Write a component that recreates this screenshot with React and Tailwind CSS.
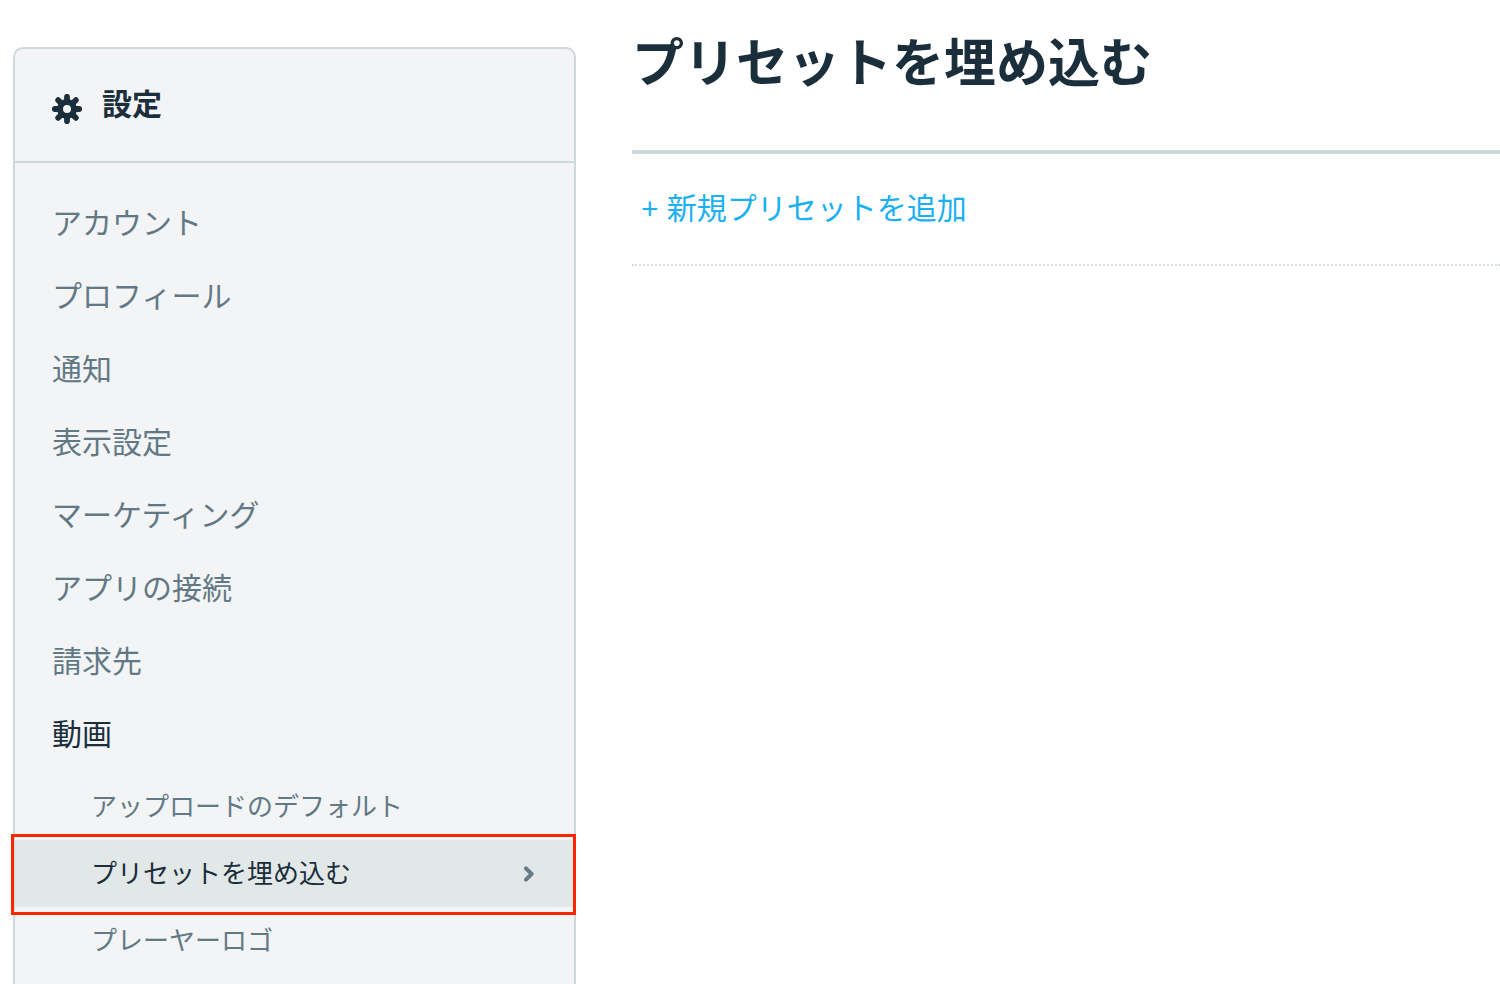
/**
 * Settings Page
 *
 * Sidebar navigation on the left, embed preset list on the right.
 */

const mainLinks = [
  'アカウント',
  'プロフィール',
  '通知',
  '表示設定',
  'マーケティング',
  'アプリの接続',
  '請求先',
];

const videoLinks = [
  { label: 'アップロードのデフォルト' },
  { label: 'プリセットを埋め込む', active: true },
  { label: 'プレーヤーロゴ' },
];

const GearIcon = ({ className }) => (
  <svg className={className} viewBox="0 0 30 30" fill="none" aria-hidden="true">
    <circle cx="15" cy="15" r="7" stroke="currentColor" strokeWidth="6" />
    <path
      d="M15 1.8v6M15 22.2v6M1.8 15h6M22.2 15h6M5.5 5.5l4 4M20.5 20.5l4 4M24.5 5.5l-4 4M9.5 20.5l-4 4"
      stroke="currentColor"
      strokeWidth="3.6"
      strokeLinecap="round"
    />
    <path
      d="M15 2.9v5M15 22.1v5M2.9 15h5M22.1 15h5M6.2 6.2l3.4 3.4M20.4 20.4l3.4 3.4M23.8 6.2l-3.4 3.4M9.6 20.4l-3.4 3.4"
      stroke="currentColor"
      strokeWidth="5.8"
      strokeLinecap="round"
    />
  </svg>
);

const ChevronIcon = ({ className }) => (
  <svg className={className} viewBox="0 0 10 16" fill="none" aria-hidden="true">
    <path
      d="M2 2.4L7.6 8L2 13.6"
      stroke="currentColor"
      strokeWidth="4"
      strokeLinecap="round"
      strokeLinejoin="round"
    />
  </svg>
);

const SubLink = ({ label, active = false }) => (
  <li className="relative">
    <a
      href="#"
      aria-current={active ? 'page' : undefined}
      className={`flex h-[67px] items-center justify-between pr-10 pl-19 text-[26px] leading-8 ${
        active ? 'bg-[#e2e8e7] text-[#1a2e3b]' : 'text-[#627985]'
      }`}
    >
      {label}
      {active && <ChevronIcon className="h-4 w-2.5 text-[#667b8a]" />}
    </a>

    {/* Red outline around the current page */}
    {active && (
      <span className="pointer-events-none absolute -top-1.5 -right-0.5 -bottom-2 -left-1 z-10 border-3 border-[#ff2600]" />
    )}
  </li>
);

const Sidebar = () => (
  <aside className="mt-[47px] w-[563px] shrink-0 rounded-t-[10px] border-2 border-b-0 border-[#ced9dc] bg-[#f2f4f6]">
    <header className="flex h-[114px] items-center gap-5 border-b-2 border-[#ced9dc] px-[37px] text-[#1a2e3b]">
      <GearIcon className="mt-2 size-[30px]" />
      <h2 className="text-[30px] leading-9 font-bold">設定</h2>
    </header>

    <nav aria-label="設定" className="pt-6">
      <ul className="text-[30px] leading-9 text-[#627985]">
        {mainLinks.map((label) => (
          <li key={label}>
            <a href="#" className="flex h-[73px] items-center px-[37px]">
              {label}
            </a>
          </li>
        ))}
        <li>
          <a href="#" className="flex h-[73px] items-center px-[37px] text-[#1a2e3b]">
            動画
          </a>
          <ul className="pt-0.5">
            {videoLinks.map((link) => (
              <SubLink key={link.label} {...link} />
            ))}
          </ul>
        </li>
      </ul>
    </nav>
  </aside>
);

const App = () => {
  return (
    <div
      lang="ja"
      className="flex min-h-screen gap-14 bg-white pl-[13px] font-['Liberation_Sans','Noto_Sans_CJK_JP',sans-serif]"
    >
      <Sidebar />

      <main className="min-w-0 flex-1">
        <h1 className="border-b-4 border-[#ced9dc] pt-[34px] pb-14 text-[52px] leading-[60px] font-bold text-[#1a2e3b]">
          プリセットを埋め込む
        </h1>
        <div className="flex h-28 items-center border-b-2 border-dotted border-[#d3dcde] pl-[9px]">
          <a href="#" className="text-[30px] leading-9 text-[#1ab0f3]">
            + 新規プリセットを追加
          </a>
        </div>
      </main>
    </div>
  );
};

export default App;
